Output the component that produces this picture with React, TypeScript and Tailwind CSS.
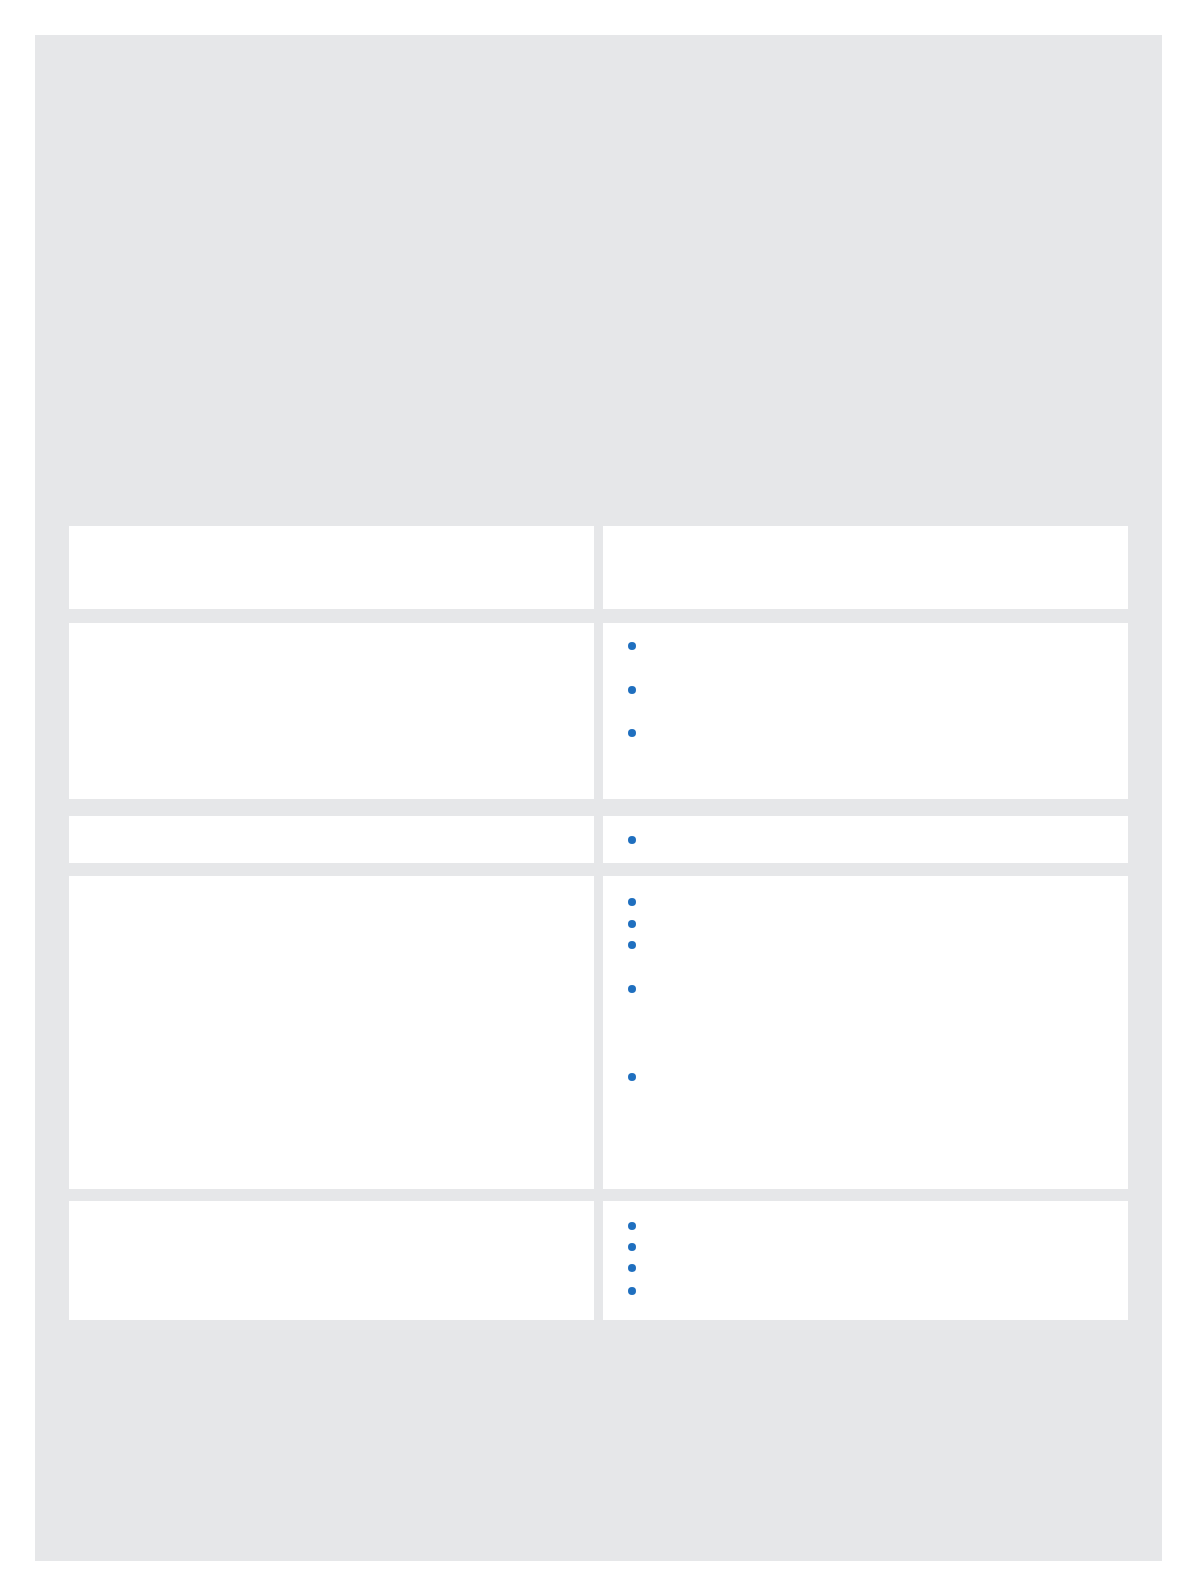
import React from "react";

function Bullet() {
  return <span className="mt-[7px] block h-[8px] w-[8px] shrink-0 rounded-full bg-[#1f6fbf]" />;
}

function Item({ h }: { h: string }) {
  return (
    <li className={`flex items-start pl-[24.5px] ${h}`}>
      <Bullet />
    </li>
  );
}

export default function App() {
  return (
    <div className="min-h-[1595px] w-full bg-white pt-[35px] font-['Liberation_Sans',Arial,sans-serif]">
      <div className="mx-[35px] h-[1526px] w-[1127px] bg-[#e6e7e9] px-[34px] pt-[491px]">
        {/* Row 1 */}
        <div className="grid h-[83px] grid-cols-[525px_525px] gap-x-[9px]">
          <div className="bg-white" />
          <div className="bg-white" />
        </div>
        {/* Row 2 */}
        <div className="mt-[14px] grid h-[176px] grid-cols-[525px_525px] gap-x-[9px]">
          <div className="bg-white" />
          <div className="bg-white">
            <ul className="pt-[12px]">
              <Item h="h-[44px]" />
              <Item h="h-[43px]" />
              <Item h="h-[66px]" />
            </ul>
          </div>
        </div>
        {/* Row 3 */}
        <div className="mt-[17px] grid h-[47px] grid-cols-[525px_525px] gap-x-[9px]">
          <div className="bg-white" />
          <div className="bg-white">
            <ul className="pt-[13px]">
              <Item h="h-[22px]" />
            </ul>
          </div>
        </div>
        {/* Row 4 */}
        <div className="mt-[13px] grid h-[313px] grid-cols-[525px_525px] gap-x-[9px]">
          <div className="bg-white" />
          <div className="bg-white">
            <ul className="pt-[15px]">
              <Item h="h-[21.7px]" />
              <Item h="h-[21.3px]" />
              <Item h="h-[44px]" />
              <Item h="h-[88px]" />
              <Item h="h-[110px]" />
            </ul>
          </div>
        </div>
        {/* Row 5 */}
        <div className="mt-[12px] grid h-[119px] grid-cols-[525px_525px] gap-x-[9px]">
          <div className="bg-white" />
          <div className="bg-white">
            <ul className="pt-[13.7px]">
              <Item h="h-[21.3px]" />
              <Item h="h-[21.3px]" />
              <Item h="h-[22.7px]" />
              <Item h="h-[22px]" />
            </ul>
          </div>
        </div>
      </div>
    </div>
  );
}
